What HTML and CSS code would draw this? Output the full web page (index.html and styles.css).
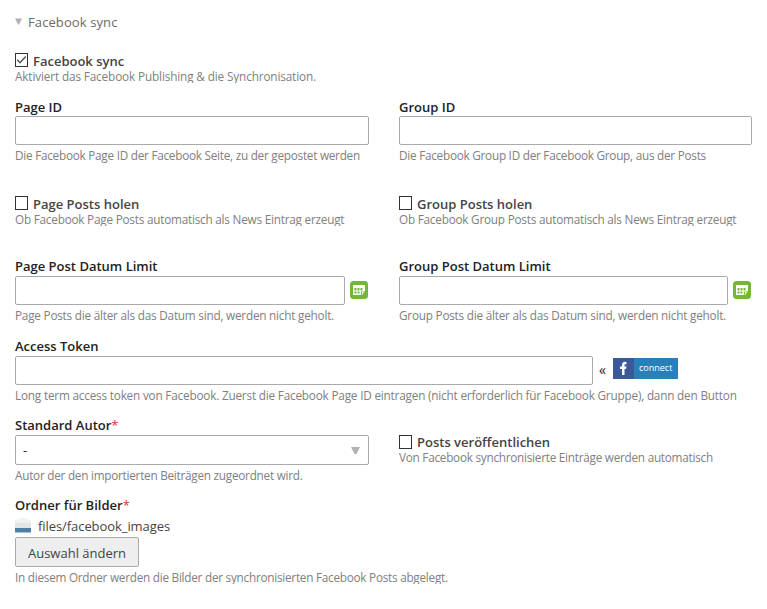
FILE: index.html
```html
<!DOCTYPE html>
<html lang="de">
<head>
<meta charset="utf-8">
<title>Facebook sync</title>
<link rel="stylesheet" href="styles.css">
</head>
<body>
<form class="palette">
  <div class="legend"><svg class="arrow" width="7" height="7" viewBox="0 0 7 7"><path d="M0 .5h7L4 6.500H3z"/></svg><span>Facebook sync</span></div>

  <div class="widget wide enable">
    <label class="check"><span class="box"><svg width="13" height="14" viewBox="0 0 13 14"><path d="M2.200 6.800l2.800 2.900 5.700-6.200"/></svg></span><span>Facebook sync</span></label>
    <p class="help clip">Aktiviert das Facebook Publishing &amp; die Synchronisation.</p>
  </div>

  <div class="widget ids">
    <label class="title">Page ID</label>
    <div class="field"></div>
    <p class="help">Die Facebook Page ID der Facebook Seite, zu der gepostet werden</p>
  </div>
  <div class="widget ids">
    <label class="title">Group ID</label>
    <div class="field"></div>
    <p class="help">Die Facebook Group ID der Facebook Group, aus der Posts</p>
  </div>

  <div class="widget fetch">
    <label class="check"><span class="box"></span><span>Page Posts holen</span></label>
    <p class="help clip">Ob Facebook Page Posts automatisch als News Eintrag erzeugt</p>
  </div>
  <div class="widget fetch">
    <label class="check"><span class="box"></span><span>Group Posts holen</span></label>
    <p class="help clip">Ob Facebook Group Posts automatisch als News Eintrag erzeugt</p>
  </div>

  <div class="widget dates">
    <label class="title">Page Post Datum Limit</label>
    <div class="inline"><div class="field"></div><svg class="calendar" width="18" height="18" viewBox="0 0 18 18"><rect width="18" height="18" rx="3.500" fill="#73b833"/><path d="M3 4h12v6l-3 4H3z" fill="#fff"/><path d="M4.500 7h2v2.500h-2zM7.500 7h2v2.500h-2zM10.500 7h2v2.500h-2zM4.500 10.500h2v2h-2zM7.500 10.500h2v2h-2zM11 10.500h4L11 14z" fill="#73b833"/><path d="M12 11h2l-2 2.500z" fill="#fff"/></svg></div>
    <p class="help">Page Posts die älter als das Datum sind, werden nicht geholt.</p>
  </div>
  <div class="widget dates">
    <label class="title">Group Post Datum Limit</label>
    <div class="inline"><div class="field"></div><svg class="calendar" width="18" height="18" viewBox="0 0 18 18"><rect width="18" height="18" rx="3.500" fill="#73b833"/><path d="M3 4h12v6l-3 4H3z" fill="#fff"/><path d="M4.500 7h2v2.500h-2zM7.500 7h2v2.500h-2zM10.500 7h2v2.500h-2zM4.500 10.500h2v2h-2zM7.500 10.500h2v2h-2zM11 10.500h4L11 14z" fill="#73b833"/><path d="M12 11h2l-2 2.500z" fill="#fff"/></svg></div>
    <p class="help">Group Posts die älter als das Datum sind, werden nicht geholt.</p>
  </div>

  <div class="widget wide token">
    <label class="title">Access Token</label>
    <div class="inline"><div class="field"></div><span class="quote">«</span><a class="connect"><span class="fb"><svg width="21" height="21" viewBox="0 0 21 21"><path d="M9 17v-6H7V8.500h2V7c0-2.300 1.200-3.200 3-3.200l1.500.1v2.300h-1c-.9 0-1 .4-1 1.100v1.200h2L13 11h-1.500v6z" fill="#fff"/></svg></span><span class="connect-text">connect</span></a></div>
    <p class="help">Long term access token von Facebook. Zuerst die Facebook Page ID eintragen (nicht erforderlich für Facebook Gruppe), dann den Button</p>
  </div>

  <div class="widget author">
    <label class="title">Standard Autor<span class="mandatory">*</span></label>
    <div class="field select"><span>-</span><svg width="9" height="7" viewBox="0 0 9 7"><path d="M0 0h9L5.500 7h-2z"/></svg></div>
    <p class="help">Autor der den importierten Beiträgen zugeordnet wird.</p>
  </div>
  <div class="widget publish">
    <label class="check"><span class="box"></span><span>Posts veröffentlichen</span></label>
    <p class="help">Von Facebook synchronisierte Einträge werden automatisch</p>
  </div>

  <div class="widget wide folder">
    <label class="title">Ordner für Bilder<span class="mandatory">*</span></label>
    <div class="path"><svg width="16" height="16" viewBox="0 0 16 16"><path d="M0 3l4-1 1-1 3-.5 1 1h4l1 1 2 1v8H0z" fill="#f2f2f2"/><path d="M0 5.500h16V11H0z" fill="#e2e4e5"/><path d="M0 11h16v4.500H0z" fill="#4d7fa8"/></svg><span>files/facebook_images</span></div>
    <button type="button">Auswahl ändern</button>
    <p class="help clip">In diesem Ordner werden die Bilder der synchronisierten Facebook Posts abgelegt.</p>
  </div>
</form>
</body>
</html>
```
FILE: styles.css
```css
* { box-sizing: border-box; }
body { margin: 0; background: #fff; color: #444; font: 13px/18px "Open Sans", "Noto Sans", sans-serif; }
.palette { display: grid; grid-template-columns: 354px 353px; column-gap: 30px; grid-template-rows: 40px 45px 95px 65px 80px 79px 80px 92px; padding: 13px 15px 0; width: 767px; height: 609px; overflow: hidden; white-space: nowrap; }
.legend, .wide { grid-column: 1 / -1; }
.legend { display: flex; align-items: flex-start; gap: 6px; color: #6a6a6a; letter-spacing: .1px; }
.arrow { margin-top: 5px; fill: #b2b2b2; }
.title { display: block; height: 18px; color: #222; font-weight: 600; line-height: 16px; }
.ids .title { line-height: 18px; }
.help { height: 16px; margin: 2px 0 0; color: #808080; font-size: 11.75px; line-height: 16px; letter-spacing: -.25px; }
.enable .help { letter-spacing: -.13px; }
.fetch .help, .dates .help { letter-spacing: -.22px; }
.token .help { letter-spacing: -.19px; }
.clip { height: 15px; overflow: hidden; }
.check { display: flex; gap: 5px; height: 16px; font-weight: 600; line-height: 17px; }
.check + .help { margin-top: -1px; }
.box { width: 13px; height: 14px; border: 1px solid #333; background: #fff; }
.box svg { display: block; margin: -1px; fill: none; stroke: #555; stroke-width: 1.5; }
.field { height: 29px; border: 1px solid #aaa; border-radius: 2px; background: #fff; }
.inline { display: flex; align-items: center; }
.inline .field { flex: 1; }
.calendar { margin: -2px 1px 0 5px; }
.fetch { padding-top: 3px; }
.token .field { flex: 0 0 578px; }
.quote { width: 20px; margin-top: -2px; padding-left: 6px; color: #222; font-size: 14px; }
.connect { display: flex; width: 65px; height: 21px; margin-top: -5px; background: #297fb8; color: #fff; font-size: 9px; line-height: 20px; }
.fb { width: 21px; height: 21px; background: #3b5998; }
.fb svg { display: block; }
.connect-text { padding-left: 5px; }
.select { display: flex; align-items: center; justify-content: space-between; height: 30px; padding: 0 8px 0 7px; color: #222; }
.select svg { fill: #b2b2b2; }
.mandatory { color: #d33; font-weight: 400; }
.publish { padding-top: 17px; }
.publish .box { margin-top: 1px; }
.path { display: flex; gap: 7px; height: 22px; line-height: 22px; align-items: center; letter-spacing: -.07px; }
.path svg { margin-top: -2px; }
button { display: block; width: 124px; height: 30px; padding: 2px 0 0; border: 1px solid #aaa; border-radius: 2px; background: #eee; color: #444; font: 13px/26px "Open Sans", "Noto Sans", sans-serif; }
```
